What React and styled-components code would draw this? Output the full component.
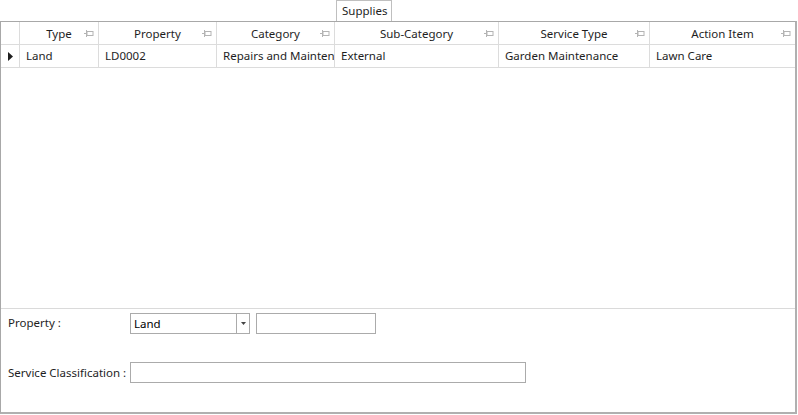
import React from 'react'
import styled, { createGlobalStyle } from 'styled-components'

const GlobalStyle = createGlobalStyle`
  html, body { margin: 0; padding: 0; background: #fff; }
  body {
    font-family: "Noto Sans", "Open Sans", sans-serif;
    font-size: 11.5px;
    color: #1e1e1e;
  }
`

const Page = styled.div`
  width: 798px;
  height: 415px;
  display: flex;
  flex-direction: column;
  box-sizing: border-box;
`

const TabStrip = styled.div`
  height: 21px;
  display: flex;
  padding-left: 336px;
`

const Tab = styled.div`
  height: 21px;
  padding: 0 3px 0 5px;
  border: 1px solid #bfbfbf;
  border-bottom: none;
  box-sizing: border-box;
  line-height: 19px;
  background: #fff;
  position: relative;
  z-index: 1;
  margin-bottom: -1px;
`

const Panel = styled.div`
  flex: 1;
  margin-right: 1px;
  margin-bottom: 1px;
  border: 1px solid #a8a8a8;
  border-right: 2px solid #b0b0b0;
  border-bottom: 2px solid #b0b0b0;
  display: flex;
  flex-direction: column;
`

const Grid = styled.div`
  height: 286px;
  border-bottom: 1px solid #dadada;
  display: flex;
  flex-direction: column;
`

const Row = styled.div`
  display: grid;
  grid-template-columns: 19px 79px 118px 118px 164px 151px 1fr;
  height: 22px;
  border-bottom: 1px solid #dcdcdc;
`

const HeadCell = styled.div`
  display: flex;
  align-items: center;
  justify-content: center;
  position: relative;
  border-right: 1px solid #dcdcdc;
  &:last-child { border-right: none; }
`

const Pin = styled.svg`
  position: absolute;
  right: 4px;
  top: 8px;
`

const Cell = styled.div`
  padding: 0 5px 0 6px;
  line-height: 22px;
  white-space: nowrap;
  overflow: hidden;
  text-overflow: clip;
  border-right: 1px solid #dcdcdc;
  &:last-child { border-right: none; }
`

const Indicator = styled.div`
  display: flex;
  align-items: center;
  justify-content: center;
  border-right: 1px solid #dcdcdc;
`

const Form = styled.div`
  display: flex;
  flex-direction: column;
  padding: 4px 0 0 7px;
  gap: 28px;
`

const FormRow = styled.div`
  display: flex;
  align-items: center;
`

const Label = styled.div`
  width: 122px;
  white-space: nowrap;
  align-self: ${p => (p.top ? 'flex-start' : 'center')};
  padding-top: ${p => (p.top ? '2px' : '0')};
`

const Combo = styled.div`
  width: 120px;
  height: 21px;
  box-sizing: border-box;
  border: 1px solid #ababab;
  display: flex;
`

const ComboText = styled.div`
  flex: 1;
  padding-left: 3px;
  line-height: 19px;
  color: #000;
`

const ComboButton = styled.div`
  width: 12px;
  border-left: 1px solid #ababab;
  display: flex;
  align-items: center;
  justify-content: center;
`

const TextBox = styled.div`
  width: ${p => p.w}px;
  height: 21px;
  box-sizing: border-box;
  border: 1px solid #ababab;
  margin-left: ${p => p.gap || 0}px;
`

const columns = ['Type', 'Property', 'Category', 'Sub-Category', 'Service Type', 'Action Item']
const record = ['Land', 'LD0002', 'Repairs and Maintenance', 'External', 'Garden Maintenance', 'Lawn Care']

function PinIcon() {
  return (
    <Pin width="10" height="7" viewBox="0 0 10 7">
      <line x1="0" y1="3.5" x2="2" y2="3.5" stroke="#b4b4b4" />
      <line x1="2.5" y1="0" x2="2.5" y2="7" stroke="#b4b4b4" />
      <rect x="3" y="1.5" width="6" height="4" fill="none" stroke="#b4b4b4" />
    </Pin>
  )
}

export default function App() {
  return (
    <Page>
      <GlobalStyle />
      <TabStrip>
        <Tab>Supplies</Tab>
      </TabStrip>
      <Panel>
        <Grid>
          <Row>
            <Indicator />
            {columns.map(c => (
              <HeadCell key={c}>
                {c}
                <PinIcon />
              </HeadCell>
            ))}
          </Row>
          <Row>
            <Indicator>
              <svg width="5" height="9" viewBox="0 0 5 9">
                <polygon points="0,0 5,4.5 0,9" fill="#1e1e1e" />
              </svg>
            </Indicator>
            {record.map((v, i) => (
              <Cell key={i}>{v}</Cell>
            ))}
          </Row>
        </Grid>
        <Form>
          <FormRow>
            <Label top>Property :</Label>
            <Combo>
              <ComboText>Land</ComboText>
              <ComboButton>
                <svg width="5" height="3" viewBox="0 0 5 3">
                  <polygon points="0,0 5,0 2.5,3" fill="#444" />
                </svg>
              </ComboButton>
            </Combo>
            <TextBox w={120} gap={6} />
          </FormRow>
          <FormRow>
            <Label>Service Classification :</Label>
            <TextBox w={396} />
          </FormRow>
        </Form>
      </Panel>
    </Page>
  )
}
